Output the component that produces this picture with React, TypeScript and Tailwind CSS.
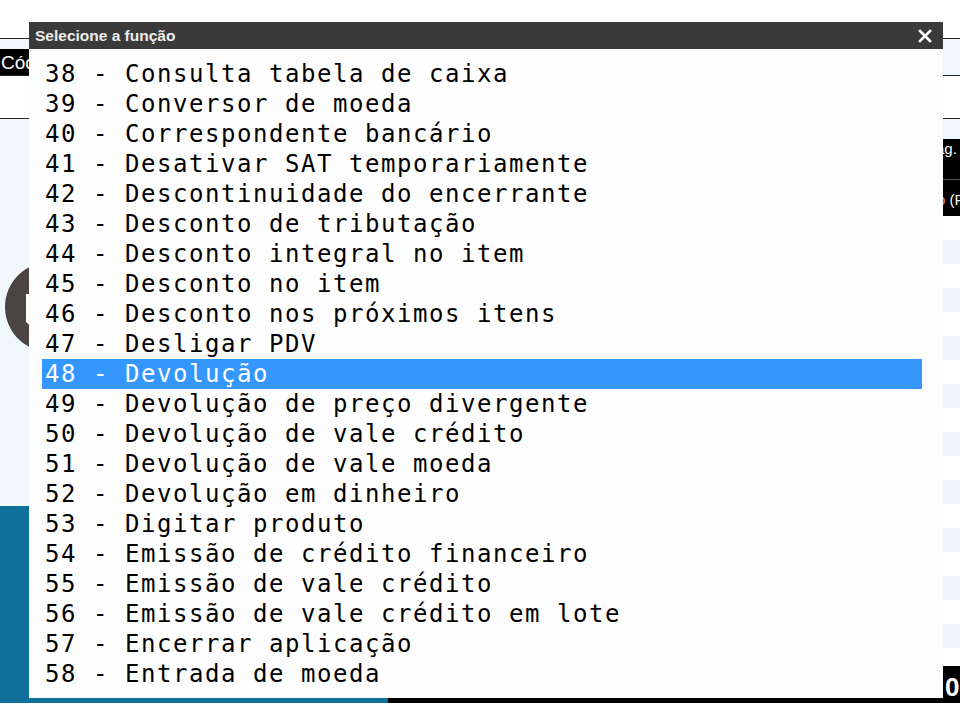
import React from "react";

const items = [
  "38 - Consulta tabela de caixa",
  "39 - Conversor de moeda",
  "40 - Correspondente bancário",
  "41 - Desativar SAT temporariamente",
  "42 - Descontinuidade do encerrante",
  "43 - Desconto de tributação",
  "44 - Desconto integral no item",
  "45 - Desconto no item",
  "46 - Desconto nos próximos itens",
  "47 - Desligar PDV",
  "48 - Devolução",
  "49 - Devolução de preço divergente",
  "50 - Devolução de vale crédito",
  "51 - Devolução de vale moeda",
  "52 - Devolução em dinheiro",
  "53 - Digitar produto",
  "54 - Emissão de crédito financeiro",
  "55 - Emissão de vale crédito",
  "56 - Emissão de vale crédito em lote",
  "57 - Encerrar aplicação",
  "58 - Entrada de moeda",
];

export default function App() {
  return (
    <div className="relative w-[960px] h-[703px] overflow-hidden bg-white font-['Liberation_Sans',Arial,sans-serif]">
      {/* Background page */}
      <div className="flex flex-col h-full">
        <div className="h-[38px] bg-white shrink-0" />
        <div className="h-[1px] bg-[#222] shrink-0" />
        <div className="h-[36px] bg-[#f0f8fb] shrink-0 flex items-start">
          <div className="mt-[10px] h-[27px] w-[29px] overflow-hidden whitespace-nowrap bg-black text-white text-[19px] leading-[27px] pl-[1px]">
            Cód
          </div>
        </div>
        <div className="h-[1px] bg-[#222] shrink-0" />
        <div className="h-[42px] bg-white shrink-0" />
        <div className="h-[1px] bg-[#222] shrink-0" />
        <div className="flex flex-1 min-h-0">
          {/* left column */}
          <div className="w-[388px] flex flex-col shrink-0">
            <div className="h-[387px] bg-[#f0f8fb] pt-[143px] pl-[5px]">
              <svg width="90" height="90" viewBox="0 0 90 90">
                <circle cx="45" cy="45" r="45" fill="#4a4543" />
                <polygon points="21,32 69,32 69,60 55,72 35,72 21,60" fill="#ffffff" />
              </svg>
            </div>
            <div className="flex-1 bg-[#0f7099]" />
          </div>
          {/* right column */}
          <div className="flex-1 flex flex-col">
            <div className="h-[20px] bg-[#f0f8fb]" />
            <div className="h-[40px] bg-black flex items-start pt-[1px] whitespace-nowrap text-[15px] leading-[17px] text-white pl-[538px]">
              Pag. <span className="text-[#5aa8e6] ml-[4px]">Q</span>
            </div>
            <div className="h-[1px] bg-[#555]" />
            <div className="h-[36px] bg-black flex items-start pt-[11px] whitespace-nowrap text-[15px] leading-[17px] text-white pl-[549px]">
              <span className="text-[#e08a2a]">o</span>&nbsp;(R$
            </div>
            <div className="h-[450px] bg-white pt-[24px] flex flex-col gap-[24px]">
              {Array.from({ length: 9 }).map((_, i) => (
                <div key={i} className="h-[24px] bg-[#f2f5fa]" />
              ))}
            </div>
            <div className="flex-1 bg-black pl-[557px] pt-[8px] text-white font-bold text-[26px] leading-[26px]">
              0
            </div>
          </div>
        </div>
      </div>

      {/* Modal */}
      <div className="absolute left-[29px] top-[22px] w-[914px] h-[676px] bg-[#fdfdfd] flex flex-col">
        <div className="h-[27px] bg-[#3a3a3a] flex items-center justify-between pl-[6px] pr-[11px] shrink-0">
          <span className="text-[15.5px] font-bold text-[#ececec]">Selecione a função</span>
          <svg width="14" height="14" viewBox="0 0 14 14">
            <path d="M2 2 L12 12 M12 2 L2 12" stroke="#ffffff" strokeWidth="2.6" strokeLinecap="square" />
          </svg>
        </div>
        <div className="pt-[10px] pl-[13px] pr-[21px]">
          {items.map((t, i) => {
            const sel = t.startsWith("48");
            return (
              <div
                key={i}
                className={`h-[30px] pl-[3px] whitespace-pre font-['DejaVu_Sans_Mono',monospace] text-[24px] leading-[30px] tracking-[1.55px] ${
                  sel ? "bg-[#3597fe] text-white" : "text-black"
                }`}
              >
                {t}
              </div>
            );
          })}
        </div>
      </div>
    </div>
  );
}
